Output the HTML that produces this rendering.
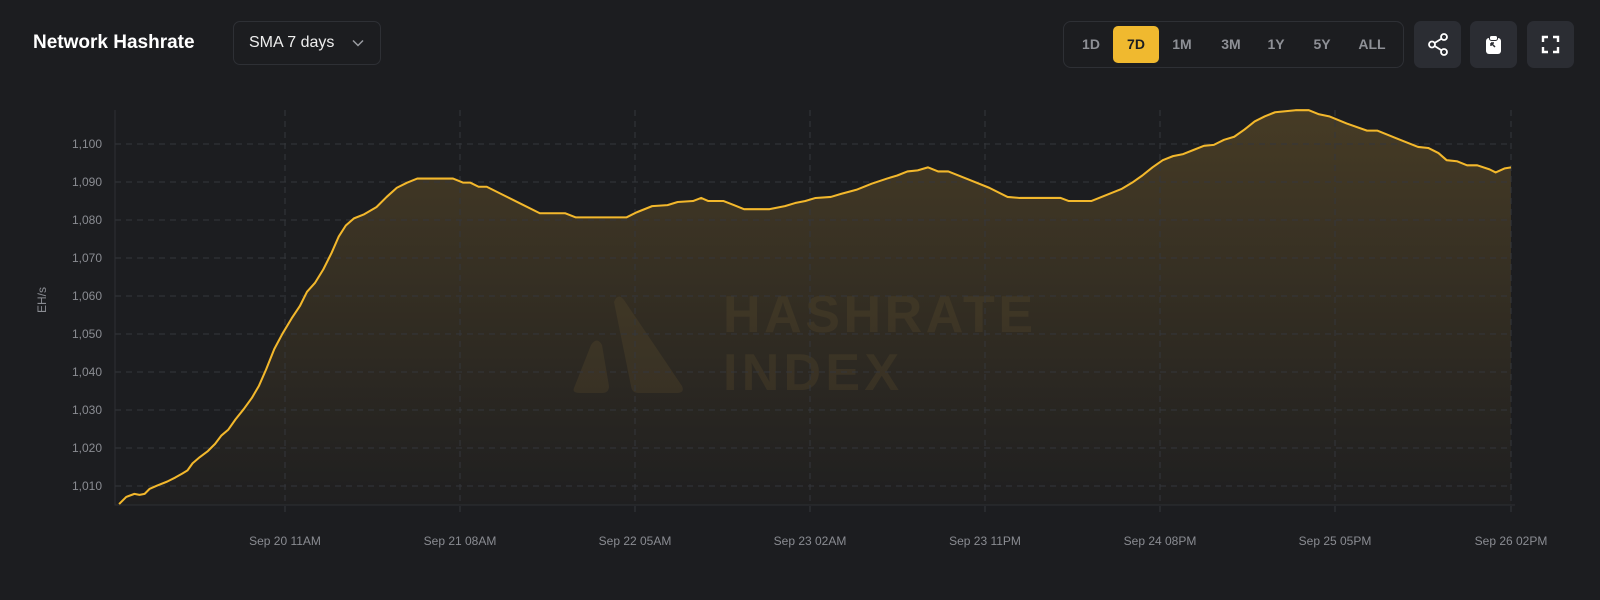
<!DOCTYPE html>
<html><head><meta charset="utf-8"><style>
html,body{margin:0;padding:0;background:#1c1d20;width:1600px;height:600px;overflow:hidden;font-family:"Liberation Sans",sans-serif}
.t{position:absolute;left:33px;top:32px;font-size:19px;font-weight:bold;color:#fff}
.dd{position:absolute;left:233px;top:21px;width:148px;height:44px;border:1px solid #2e3035;border-radius:7px;box-sizing:border-box}
.dd span{position:absolute;left:15px;top:12px;font-size:16px;color:#eee}
.grp{position:absolute;left:1063px;top:21px;width:341px;height:47px;border:1px solid #2e3035;border-radius:8px;box-sizing:border-box}
.b{position:absolute;font-size:14px;font-weight:bold;color:#8e9096;transform:translateX(-50%)}
.sel{position:absolute;left:1113px;top:26px;width:46px;height:37px;background:#f0b92f;border-radius:5px}
.ib{position:absolute;top:21px;width:47px;height:47px;background:#2b2d33;border-radius:7px}
</style></head><body>
<div class="t">Network Hashrate</div>
<div class="dd"><span>SMA 7 days</span>
<svg style="position:absolute;left:118px;top:17px" width="12" height="8"><path d="M1 1.5l5 5 5-5" stroke="#9a9ca2" stroke-width="1.5" fill="none"/></svg></div>
<div class="grp"></div>
<div class="sel"></div>
<div class="b" style="left:1091px;top:36px">1D</div>
<div class="b" style="left:1136px;top:36px;color:#1c1d20">7D</div>
<div class="b" style="left:1182px;top:36px">1M</div>
<div class="b" style="left:1231px;top:36px">3M</div>
<div class="b" style="left:1276px;top:36px">1Y</div>
<div class="b" style="left:1322px;top:36px">5Y</div>
<div class="b" style="left:1372px;top:36px">ALL</div>
<div class="ib" style="left:1414px"><svg width="47" height="47"><g stroke="#fff" stroke-width="1.8" fill="none"><circle cx="30" cy="16" r="3"/><circle cx="18" cy="23.5" r="3"/><circle cx="30" cy="31" r="3"/><path d="M20.6 22l6.8-4.3M20.6 25l6.8 4.3"/></g></svg></div>
<div class="ib" style="left:1470px"><svg width="47" height="47"><rect x="16" y="17" width="15" height="16" rx="3" fill="#fff"/><rect x="19.5" y="14.5" width="8" height="5" rx="2" fill="#fff" stroke="#2b2d33" stroke-width="1"/><path d="M21 22l4 4M21 22v3M21 22h3" stroke="#2b2d33" stroke-width="1.5" fill="none"/></svg></div>
<div class="ib" style="left:1527px"><svg width="47" height="47"><path d="M16 21v-5h5M26 16h5v5M31 26v5h-5M21 31h-5v-5" stroke="#fff" stroke-width="2.4" fill="none"/></svg></div>

<svg style="position:absolute;left:0;top:0" width="1600" height="600">
<defs><linearGradient id="g" x1="0" y1="0" x2="0" y2="1"><stop offset="0" stop-color="#463b25"/><stop offset="1" stop-color="#1f1f20"/></linearGradient></defs>
<g font-size="12" fill="#8a8c92" text-anchor="end">
<text x="102" y="148">1,100</text><text x="102" y="186">1,090</text><text x="102" y="224">1,080</text><text x="102" y="262">1,070</text><text x="102" y="300">1,060</text><text x="102" y="338">1,050</text><text x="102" y="376">1,040</text><text x="102" y="414">1,030</text><text x="102" y="452">1,020</text><text x="102" y="490">1,010</text>
</g>
<text transform="translate(46,300) rotate(-90)" font-size="12" fill="#8a8c92" text-anchor="middle">EH/s</text>
<g transform="matrix(1.0212,0,0,1.0204,-1.42,0)">
<path fill="url(#g)" d="M118,494 L125,487 133,484 138,485 143,484 148,479 155,476 165,472 173,468 180,464 185,461 190,454 197,448 205,442 212,435 218,427 225,421 232,411 240,401 248,390 255,378 262,362 270,342 278,327 287,312 295,300 302,286 310,277 318,264 326,248 333,232 340,221 348,214 358,210 370,203 380,193 390,184 400,179 410,175 425,175 445,175 455,179 462,179 470,183 478,183 490,189 510,199 530,209 545,209 555,209 565,213 590,213 615,213 625,208 640,202 655,201 665,198 680,197 688,194 695,197 710,197 720,201 730,205 755,205 770,202 780,199 790,197 800,194 815,193 825,190 840,186 855,180 870,175 880,172 890,168 900,167 910,164 920,168 930,168 950,176 970,184 988,193 1000,194 1040,194 1048,197 1070,197 1085,191 1100,185 1110,179 1120,172 1130,164 1140,157 1150,153 1160,151 1170,147 1180,143 1190,142 1200,137 1210,134 1220,127 1230,119 1240,114 1250,110 1270,108 1283,108 1293,112 1303,114 1320,121 1340,128 1350,128 1370,136 1390,144 1400,145 1410,150 1418,157 1428,158 1438,162 1448,162 1460,166 1466,169 1475,165 1481,164 L1481,495 L118,495Z"/>
</g>
<g fill="#5a4b2c" opacity="0.3">
<path d="M574,388 L591,345 Q597,336 602,345 L609,386 Q609,393 602,393 L580,393 Q572,393 574,388Z"/>
<path d="M614,302 Q618,292 624,300 L682,386 Q685,393 677,393 L638,393 Q632,393 631,386Z"/>
<text x="723" y="332" font-size="52" font-weight="bold" textLength="310" lengthAdjust="spacing">HASHRATE</text>
<text x="723" y="390" font-size="52" font-weight="bold" textLength="176" lengthAdjust="spacing">INDEX</text>
</g>
<g stroke="#34363b" stroke-width="1" stroke-dasharray="6 5">
<path d="M115 144H1511M115 182H1511M115 220H1511M115 258H1511M115 296H1511M115 334H1511M115 372H1511M115 410H1511M115 448H1511M115 486H1511"/>
<path d="M285 110V515M460 110V515M635 110V515M810 110V515M985 110V515M1160 110V515M1335 110V515M1511 110V515"/>
</g>
<path d="M115 110V505H1515" stroke="#2e3035" stroke-width="1" fill="none"/>
<g transform="matrix(1.0212,0,0,1.0204,-1.42,0)">
<path fill="none" stroke="#f3b82c" stroke-width="2" stroke-linejoin="round" d="M118,494 L125,487 133,484 138,485 143,484 148,479 155,476 165,472 173,468 180,464 185,461 190,454 197,448 205,442 212,435 218,427 225,421 232,411 240,401 248,390 255,378 262,362 270,342 278,327 287,312 295,300 302,286 310,277 318,264 326,248 333,232 340,221 348,214 358,210 370,203 380,193 390,184 400,179 410,175 425,175 445,175 455,179 462,179 470,183 478,183 490,189 510,199 530,209 545,209 555,209 565,213 590,213 615,213 625,208 640,202 655,201 665,198 680,197 688,194 695,197 710,197 720,201 730,205 755,205 770,202 780,199 790,197 800,194 815,193 825,190 840,186 855,180 870,175 880,172 890,168 900,167 910,164 920,168 930,168 950,176 970,184 988,193 1000,194 1040,194 1048,197 1070,197 1085,191 1100,185 1110,179 1120,172 1130,164 1140,157 1150,153 1160,151 1170,147 1180,143 1190,142 1200,137 1210,134 1220,127 1230,119 1240,114 1250,110 1270,108 1283,108 1293,112 1303,114 1320,121 1340,128 1350,128 1370,136 1390,144 1400,145 1410,150 1418,157 1428,158 1438,162 1448,162 1460,166 1466,169 1475,165 1481,164"/>
</g>
<g font-size="12" fill="#8a8c92" text-anchor="middle">
<text x="285" y="545">Sep 20 11AM</text><text x="460" y="545">Sep 21 08AM</text><text x="635" y="545">Sep 22 05AM</text><text x="810" y="545">Sep 23 02AM</text><text x="985" y="545">Sep 23 11PM</text><text x="1160" y="545">Sep 24 08PM</text><text x="1335" y="545">Sep 25 05PM</text><text x="1511" y="545">Sep 26 02PM</text>
</g>
</svg>
</body></html>
